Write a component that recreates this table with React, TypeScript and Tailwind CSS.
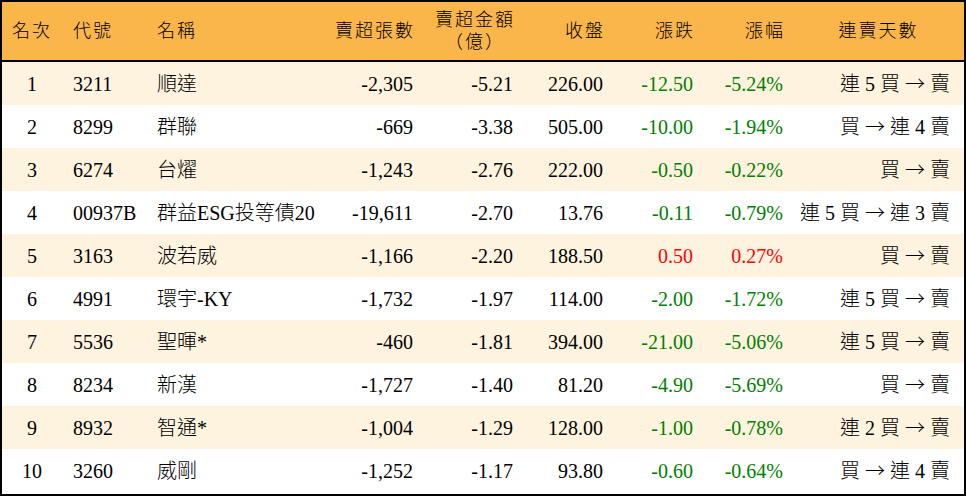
import React from 'react';

type Row = {
  rank: number;
  code: string;
  name: string;
  shares: string;
  amount: string;
  close: string;
  change: string;
  pct: string;
  streak: string;
};

const rows: Row[] = [
  { rank: 1, code: '3211', name: '順達', shares: '-2,305', amount: '-5.21', close: '226.00', change: '-12.50', pct: '-5.24%', streak: '連 5 買 → 賣' },
  { rank: 2, code: '8299', name: '群聯', shares: '-669', amount: '-3.38', close: '505.00', change: '-10.00', pct: '-1.94%', streak: '買 → 連 4 賣' },
  { rank: 3, code: '6274', name: '台燿', shares: '-1,243', amount: '-2.76', close: '222.00', change: '-0.50', pct: '-0.22%', streak: '買 → 賣' },
  { rank: 4, code: '00937B', name: '群益ESG投等債20', shares: '-19,611', amount: '-2.70', close: '13.76', change: '-0.11', pct: '-0.79%', streak: '連 5 買 → 連 3 賣' },
  { rank: 5, code: '3163', name: '波若威', shares: '-1,166', amount: '-2.20', close: '188.50', change: '0.50', pct: '0.27%', streak: '買 → 賣' },
  { rank: 6, code: '4991', name: '環宇-KY', shares: '-1,732', amount: '-1.97', close: '114.00', change: '-2.00', pct: '-1.72%', streak: '連 5 買 → 賣' },
  { rank: 7, code: '5536', name: '聖暉*', shares: '-460', amount: '-1.81', close: '394.00', change: '-21.00', pct: '-5.06%', streak: '連 5 買 → 賣' },
  { rank: 8, code: '8234', name: '新漢', shares: '-1,727', amount: '-1.40', close: '81.20', change: '-4.90', pct: '-5.69%', streak: '買 → 賣' },
  { rank: 9, code: '8932', name: '智通*', shares: '-1,004', amount: '-1.29', close: '128.00', change: '-1.00', pct: '-0.78%', streak: '連 2 買 → 賣' },
  { rank: 10, code: '3260', name: '威剛', shares: '-1,252', amount: '-1.17', close: '93.80', change: '-0.60', pct: '-0.64%', streak: '買 → 連 4 賣' },
];

const cols = 'grid grid-cols-[60px_84px_184px_93px_100px_90px_90px_90px_171px]';
const font = "font-['Liberation_Serif','Noto_Sans_CJK_TC',serif]";

// the arrow is wider in the reference than Liberation Serif's glyph
const Streak = ({ text }: { text: string }) => {
  const parts = text.split(' → ');
  return (
    <>
      {parts[0]}
      <span className="inline-block w-[30px] text-center font-['Noto_Sans_CJK_TC',sans-serif] font-light">→</span>
      {parts[1]}
    </>
  );
};

export default function App() {
  return (
    <div className={`w-[966px] h-[496px] bg-white border-2 border-black text-black font-light ${font}`}>
      <div className={`${cols} h-[60px] items-center bg-[#fbb64b] border-b-2 border-black text-[18px] tracking-[2px]`}>
        <div className="text-center">名次</div>
        <div className="pl-[11px]">代號</div>
        <div className="pl-[11px]">名稱</div>
        <div className="text-right pr-[8px]">賣超張數</div>
        <div className="flex justify-end pr-[8px]">
          <div className="text-center leading-[22px]">
            <div>賣超金額</div>
            <div>（億）</div>
          </div>
        </div>
        <div className="text-right pr-[8px]">收盤</div>
        <div className="text-right pr-[8px]">漲跌</div>
        <div className="text-right pr-[8px]">漲幅</div>
        <div className="text-center">連賣天數</div>
      </div>
      {rows.map((r, i) => {
        const color = r.change.startsWith('-') ? 'text-[#008000]' : 'text-[#ff0000]';
        return (
          <div
            key={r.rank}
            className={`${cols} h-[43px] items-center text-[20px] ${i % 2 === 0 ? 'bg-[#fef3df]' : 'bg-white'}`}
          >
            <div className="text-center">{r.rank}</div>
            <div className="pl-[11px]">{r.code}</div>
            <div className="pl-[11px] whitespace-nowrap">{r.name}</div>
            <div className="text-right pr-[10px]">{r.shares}</div>
            <div className="text-right pr-[10px]">{r.amount}</div>
            <div className="text-right pr-[10px]">{r.close}</div>
            <div className={`text-right pr-[10px] ${color}`}>{r.change}</div>
            <div className={`text-right pr-[10px] ${color}`}>{r.pct}</div>
            <div className="text-right pr-[14px] whitespace-pre">
              <Streak text={r.streak} />
            </div>
          </div>
        );
      })}
    </div>
  );
}
